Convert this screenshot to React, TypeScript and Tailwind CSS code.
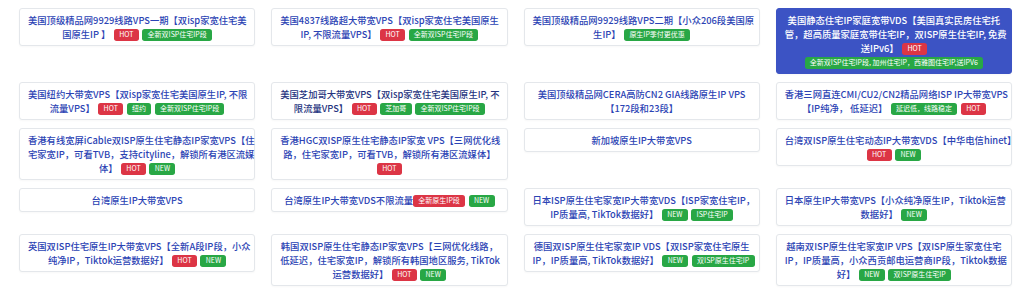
import React from "react";

type Badge = { b: string; c: "r" | "g"; tight?: boolean };
type Seg = string | Badge;
type CardData = { lines: Seg[][]; dark?: boolean; hl?: boolean };

const HOT: Badge = { b: "HOT", c: "r" };
const NEW: Badge = { b: "NEW", c: "g" };
const G = (b: string): Badge => ({ b, c: "g" });

const cards: CardData[] = [
  // row 1
  {
    lines: [
      ["美国顶级精品网9929线路VPS一期【双isp家宽住宅美"],
      ["国原生IP 】", HOT, G("全新双ISP住宅IP段")],
    ],
  },
  {
    lines: [
      ["美国4837线路超大带宽VPS【双isp家宽住宅美国原生"],
      ["IP, 不限流量VPS】", HOT, G("全新双ISP住宅IP段")],
    ],
  },
  {
    lines: [
      ["美国顶级精品网9929线路VPS二期【小众206段美国原"],
      ["生IP】", G("原生IP季付更优惠")],
    ],
  },
  {
    hl: true,
    lines: [
      ["美国静态住宅IP家庭宽带VDS【美国真实民房住宅托"],
      ["管，超高质量家庭宽带住宅IP，双ISP原生住宅IP, 免费"],
      ["送IPv6】", HOT],
      [G("全新双ISP住宅IP段, 加州住宅IP，西雅图住宅IP,送IPV6")],
    ],
  },
  // row 2
  {
    lines: [
      ["美国纽约大带宽VPS【双isp家宽住宅美国原生IP, 不限"],
      ["流量VPS】", HOT, G("纽约"), G("全新双ISP住宅IP段")],
    ],
  },
  {
    dark: true,
    lines: [
      ["美国芝加哥大带宽VPS【双isp家宽住宅美国原生IP, 不"],
      ["限流量VPS】", HOT, G("芝加哥"), G("全新双ISP住宅IP段")],
    ],
  },
  {
    lines: [["美国顶级精品网CERA高防CN2 GIA线路原生IP VPS"], ["【172段和23段】"]],
  },
  {
    lines: [
      ["香港三网直连CMI/CU2/CN2精品网络ISP IP大带宽VPS"],
      ["【IP纯净， 低延迟】", G("延迟低，线路稳定"), HOT],
    ],
  },
  // row 3
  {
    lines: [
      ["香港有线宽屏iCable双ISP原生住宅静态IP家宽VPS【住"],
      ["宅家宽IP，可看TVB，支持cityline，解锁所有港区流媒"],
      ["体】", HOT, NEW],
    ],
  },
  {
    lines: [
      ["香港HGC双ISP原生住宅静态IP家宽 VPS【三网优化线"],
      ["路，住宅家宽IP，可看TVB，解锁所有港区流媒体】"],
      [HOT],
    ],
  },
  { lines: [["新加坡原生IP大带宽VPS"]] },
  {
    lines: [["台湾双ISP原生住宅动态IP大带宽VDS【中华电信hinet】"], [HOT, NEW]],
  },
  // row 4
  { lines: [["台湾原生IP大带宽VPS"]] },
  {
    lines: [["台湾原生IP大带宽VDS不限流量", { b: "全新原生IP段", c: "r", tight: true }, NEW]],
  },
  {
    lines: [
      ["日本ISP原生住宅家宽IP大带宽VDS【ISP家宽住宅IP，"],
      ["IP质量高, TikTok数据好】", NEW, G("ISP住宅IP")],
    ],
  },
  {
    lines: [["日本原生IP大带宽VPS【小众纯净原生IP，Tiktok运营"], ["数据好】", NEW]],
  },
  // row 5
  {
    lines: [
      ["英国双ISP住宅原生IP大带宽VPS【全新A段IP段，小众"],
      ["纯净IP，Tiktok运营数据好】", HOT, NEW],
    ],
  },
  {
    lines: [
      ["韩国双ISP原生住宅静态IP家宽VPS【三网优化线路，"],
      ["低延迟，住宅家宽IP，解锁所有韩国地区服务, TikTok"],
      ["运营数据好】", HOT, NEW],
    ],
  },
  {
    lines: [
      ["德国双ISP原生住宅家宽IP VDS【双ISP家宽住宅原生"],
      ["IP，IP质量高, TikTok数据好】", NEW, G("双ISP原生住宅IP")],
    ],
  },
  {
    lines: [
      ["越南双ISP原生住宅家宽IP VPS【双ISP原生家宽住宅"],
      ["IP，IP质量高，小众西贡邮电运营商IP段，Tiktok数据"],
      ["好】", NEW, G("双ISP原生住宅IP")],
    ],
  },
];

function BadgeEl({ badge, first }: { badge: Badge; first: boolean }) {
  const color = badge.c === "r" ? "bg-[#dc3545]" : "bg-[#28a745]";
  const margin = first || badge.tight ? "ml-0" : "ml-[3.5px]";
  return (
    <span
      className={`${color} ${margin} inline-block rounded-[2.7px] px-[5.3px] py-[2.5px] align-[1px] text-[7px] font-normal leading-[7px] text-white`}
    >
      {badge.b}
    </span>
  );
}

function Card({ data }: { data: CardData }) {
  const base = data.hl
    ? "bg-[#3c53c4] border-[#3c53c4] text-white"
    : data.dark
    ? "bg-white border-[#e4e7eb] text-[#25337e]"
    : "bg-white border-[#e4e7eb] text-[#2b43b4]";
  return (
    <div
      className={`${base} rounded-[3px] border px-[8px] py-[4px] text-center text-[9.3px] font-medium leading-[14px] shadow-[0_1px_2px_rgba(0,0,0,0.03)]`}
    >
      {data.lines.map((line, i) => (
        <div key={i} className="whitespace-nowrap">
          {line.map((seg, j) =>
            typeof seg === "string" ? (
              <span key={j}>{seg}</span>
            ) : (
              <BadgeEl key={j} badge={seg} first={j === 0} />
            )
          )}
        </div>
      ))}
    </div>
  );
}

export default function App() {
  return (
    <div className="min-h-[289px] w-full bg-white font-['Noto_Sans_CJK_SC',sans-serif]">
      <div className="grid grid-cols-4 items-start gap-x-4 gap-y-2 pl-[19px] pr-[12px] pt-2">
        {cards.map((c, i) => (
          <Card key={i} data={c} />
        ))}
      </div>
    </div>
  );
}
